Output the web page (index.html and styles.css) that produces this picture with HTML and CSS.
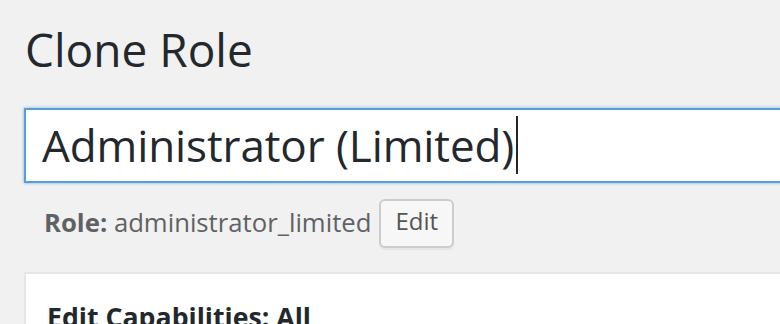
FILE: index.html
```html
<!DOCTYPE html>
<html>
<head>
<title>Clone Role</title>
<meta charset="UTF-8">
<link rel="stylesheet" href="styles.css">
</head>
<body>
  <div class="wrap">
    <h1 class="page-title">Clone Role</h1>

    <div class="title-input">Administrator (Limited)<span class="caret"></span></div>

    <div class="role-row">
      <span class="role-name"><strong>Role:</strong> administrator_limited</span>
      <button class="edit-button">Edit</button>
    </div>

    <div class="postbox">
      <h2>Edit Capabilities: All</h2>
    </div>
  </div>
</body>
</html>
```

FILE: styles.css
```css
body {
  font-family: 'Open Sans', 'Noto Sans', sans-serif;
  background-color: #f1f1f1;
  margin: 0;
  overflow: hidden;
  color: #23282d;
}
.wrap {
  padding: 19px 0 0 24px;
}
.page-title {
  font-size: 46px;
  font-weight: 400;
  line-height: 60px;
  margin: 0 0 29px 1px;
  color: #23282d;
}

/* champ du titre, avec le focus bleu */
.title-input {
  width: calc(100% + 40px);
  box-sizing: border-box;
  height: 75px;
  line-height: 71px;
  padding: 0 16px;
  font-size: 44px;
  letter-spacing: -0.1px;
  color: #23282d;
  background-color: #fff;
  border: 2px solid #5b9dd9;
  box-shadow: 0 0 3px rgba(30, 140, 190, 0.6);
  white-space: nowrap;
}
.caret {
  display: inline-block;
  width: 2px;
  height: 58px;
  margin-left: 2px;
  vertical-align: -12px;
  background-color: #23282d;
}

.role-row {
  display: flex;
  align-items: center;
  margin-top: 16px;
  padding-left: 20px;
}
.role-name {
  font-size: 25.7px;
  color: #5f6265;
  margin-bottom: 3px;
}
.role-name strong {
  font-weight: 700;
}
.edit-button {
  font-family: inherit;
  font-size: 24px;
  line-height: 40px;
  padding: 0 14px 5px;
  margin-left: 8px;
  color: #555;
  background-color: #f7f7f7;
  border: 2px solid #ccc;
  border-radius: 6px;
  box-shadow: 0 2px 0 #e6e6e6;
  cursor: pointer;
}

.postbox {
  margin-top: 24px;
  width: calc(100% + 40px);
  background-color: #fff;
  border: 2px solid #e5e5e5;
  padding: 24px 21px 21px;
  box-sizing: border-box;
}
.postbox h2 {
  margin: 0;
  font-size: 26.7px;
  font-weight: 700;
  color: #23282d;
}
```
